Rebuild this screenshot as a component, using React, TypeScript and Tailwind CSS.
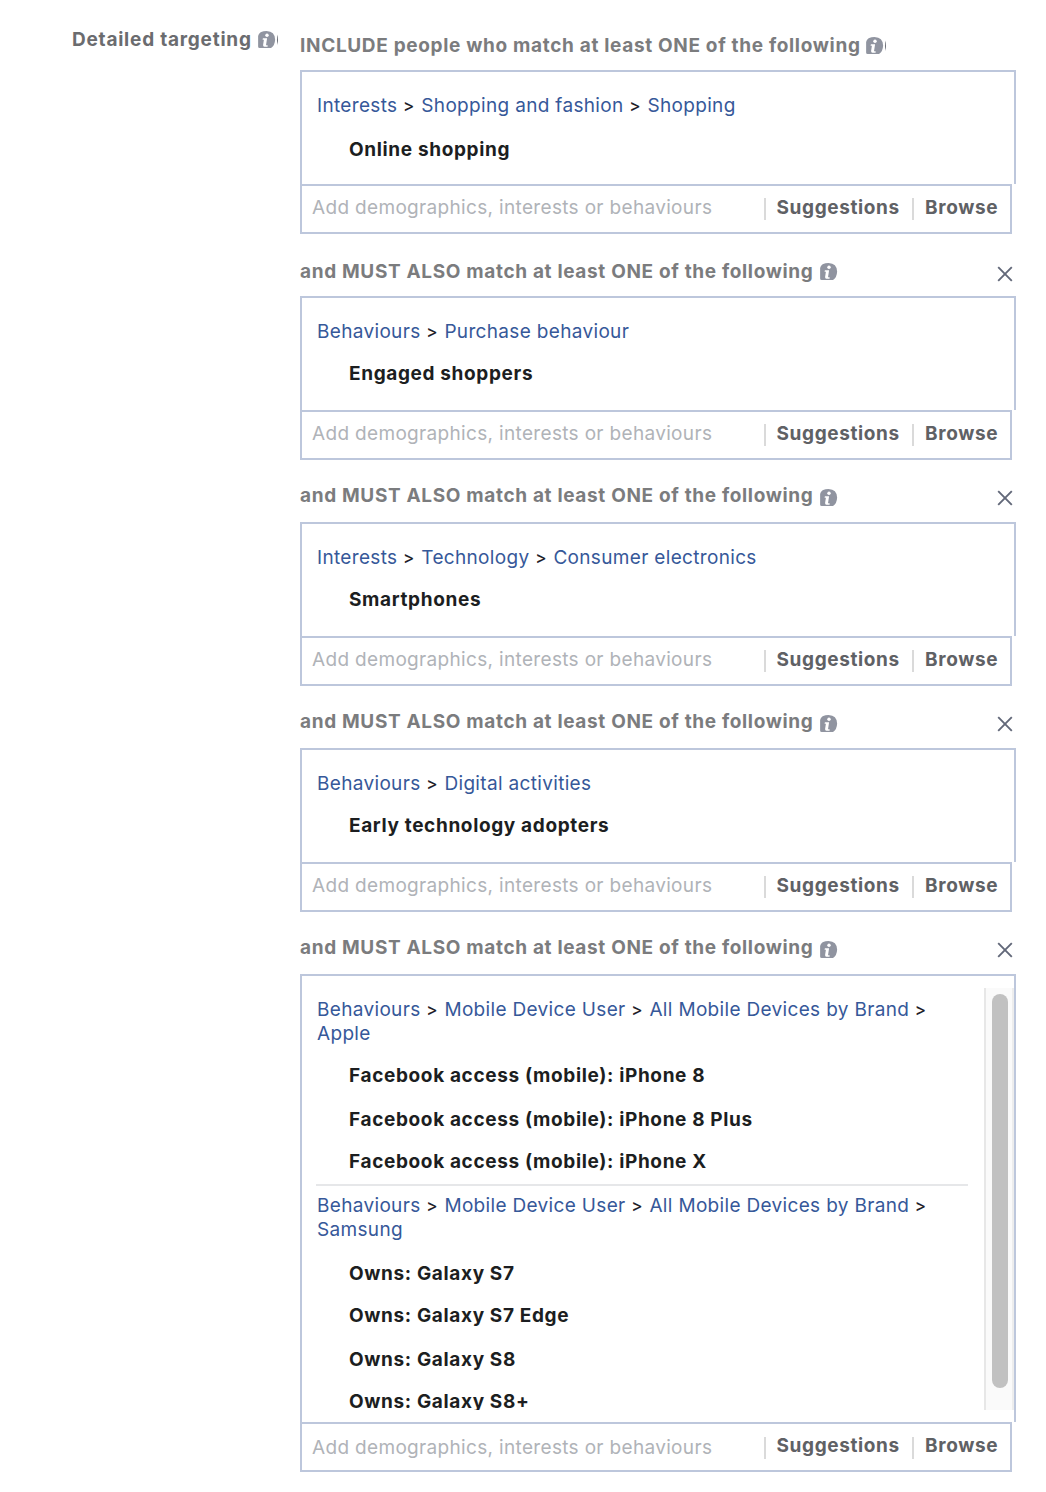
import React from "react";

function InfoIcon({ className = "", sliver = false }: { className?: string; sliver?: boolean }) {
  return (
    <svg viewBox="0 0 22 18" className={`h-[18px] w-[22px] shrink-0 overflow-hidden ${className}`}>
      <path d="M2.6 1.2Q5.4 0 8.5 0Q17 .4 17.1 8.6Q17 14.6 13 17H1.6Q.1 16.9 .1 15.4V5Q.5 2.7 2.6 1.2Z" fill="#9094a0" />
      <circle cx="9" cy="4.2" r="1.7" fill="#fff" />
      <path d="M4.9 7.2H9.1L8 14.2H9.6V15.8H6.4Q4.9 15.6 5.1 14L5.9 8.8H4.6Z" fill="#fff" />
      {sliver && <path d="M20 3.6Q18 8.8 20 14Z" fill="#6f727a" />}
    </svg>
  );
}

function CloseIcon({ className }: { className: string }) {
  return (
    <svg viewBox="0 0 16 16" className={`mr-[3px] h-4 w-4 ${className}`}>
      <path d="M1.2 1.2L14.8 14.8M14.8 1.2L1.2 14.8" stroke="#626879" strokeWidth="1.9" fill="none" />
    </svg>
  );
}

function Crumbs({ path }: { path: string[] }) {
  return (
    <div className="w-[640px] text-[19px] leading-6 tracking-[0.33px] text-[#365899]">
      {path.map((p, i) => (
        <React.Fragment key={p}>
          {i > 0 && <span className="text-[17px] leading-none font-medium tracking-[1.15px] text-[#1d2129]"> &gt; </span>}
          <span>{p}</span>
        </React.Fragment>
      ))}
    </div>
  );
}

function Item({ children, className = "" }: { children: string; className?: string }) {
  return (
    <div className={`ml-8 text-[19px] leading-6 font-bold tracking-[0.64px] text-[#1c1e21] ${className}`}>
      {children}
    </div>
  );
}

function InputBar({ last = false }: { last?: boolean }) {
  return (
    <div className="flex h-[50px] w-[712px] border-2 border-[#bdc7dc] text-[19px] leading-6 whitespace-nowrap">
      <div className={`w-[462px] pl-[10px] tracking-[0.33px] text-[#b0b3b8] ${last ? "pt-3" : "pt-[10px]"}`}>
        Add demographics, interests or behaviours
      </div>
      <div className={`h-[22px] w-[2px] bg-[#dadada] ${last ? "mt-[13px]" : "mt-3"}`} />
      <div className="w-[146px] pt-[10px] pl-[10.5px] font-bold tracking-[0.62px] text-[#5f6165]">Suggestions</div>
      <div className={`h-[22px] w-[2px] bg-[#dadada] ${last ? "mt-[13px]" : "mt-3"}`} />
      <div className="pt-[10px] pl-[11px] font-bold tracking-[0.66px] text-[#5f6165]">Browse</div>
    </div>
  );
}

function Heading({ first = false }: { first?: boolean }) {
  return (
    <div className="flex h-[62px] items-start justify-between pt-[22px]">
      <div className={`flex items-start ${first ? "pt-1" : "pt-[2px]"}`}>
        <span className="w-[513px] text-[19px] leading-6 font-bold tracking-[0.66px] whitespace-nowrap text-[#7b7c7e]">
          and MUST ALSO match at least ONE of the following
        </span>
        <InfoIcon className={first ? "mt-[3px] ml-[7px]" : "mt-[5px] ml-[7px]"} />
      </div>
      <CloseIcon className={first ? "mt-[10px]" : "mt-2"} />
    </div>
  );
}

function Simple({ path, item, first = false }: { path: string[]; item: string; first?: boolean }) {
  return (
    <>
      <div className="h-[114px] border-x-2 border-t-2 border-[#bdc7dc] pt-[22px] pl-[15px]">
        <Crumbs path={path} />
        <Item className={first ? "mt-5" : "mt-[18px]"}>{item}</Item>
      </div>
      <InputBar />
    </>
  );
}

export default function App() {
  return (
    <main className="flex h-[1492px] w-[1046px] bg-white font-['Inter',sans-serif]">
      <div className="flex w-[300px] shrink-0 items-start pt-7 pl-[72px]">
        <span className="w-[179px] text-[19px] leading-6 font-bold tracking-[0.77px] whitespace-nowrap text-[#6b6c6f]">
          Detailed targeting
        </span>
        <InfoIcon className="mt-[3px] ml-[7px]" sliver />
      </div>
      <div className="w-[716px]">
        <div className="flex h-[70px] items-start pt-[34px]">
          <span className="w-[560px] text-[19px] leading-6 font-bold tracking-[0.67px] whitespace-nowrap text-[#7b7c7e]">
            INCLUDE people who match at least ONE of the following
          </span>
          <InfoIcon className="mt-[3px] ml-[6px]" sliver />
        </div>
        <Simple first path={["Interests", "Shopping and fashion", "Shopping"]} item="Online shopping" />
        <Heading first />
        <Simple path={["Behaviours", "Purchase behaviour"]} item="Engaged shoppers" />
        <Heading />
        <Simple path={["Interests", "Technology", "Consumer electronics"]} item="Smartphones" />
        <Heading />
        <Simple path={["Behaviours", "Digital activities"]} item="Early technology adopters" />
        <Heading />
        <div className="h-[448px] border-x-2 border-t-2 border-[#bdc7dc] pt-3">
          <div className="flex h-[422px] justify-between overflow-hidden">
            <div className="pt-[10px] pl-[15px]">
              <Crumbs path={["Behaviours", "Mobile Device User", "All Mobile Devices by Brand", "Apple"]} />
              <Item className="mt-[18px]">Facebook access (mobile): iPhone 8</Item>
              <Item className="mt-5">Facebook access (mobile): iPhone 8 Plus</Item>
              <Item className="mt-[18px]">Facebook access (mobile): iPhone X</Item>
              <div className="mt-[10px] mb-2 -ml-px h-[2px] w-[652px] bg-[#e6e7e9]" />
              <Crumbs path={["Behaviours", "Mobile Device User", "All Mobile Devices by Brand", "Samsung"]} />
              <Item className="mt-5">Owns: Galaxy S7</Item>
              <Item className="mt-[18px]">Owns: Galaxy S7 Edge</Item>
              <Item className="mt-5">Owns: Galaxy S8</Item>
              <Item className="mt-[18px]">Owns: Galaxy S8+</Item>
            </div>
            <div className="h-[422px] w-[30px] border-x-2 border-l-[#e7e7e7] border-r-[#ededed] bg-[#fafafa] pt-[6px] pl-[6px]">
              <div className="h-[394px] w-4 rounded-full bg-[#c1c1c1]" />
            </div>
          </div>
        </div>
        <InputBar last />
      </div>
    </main>
  );
}
